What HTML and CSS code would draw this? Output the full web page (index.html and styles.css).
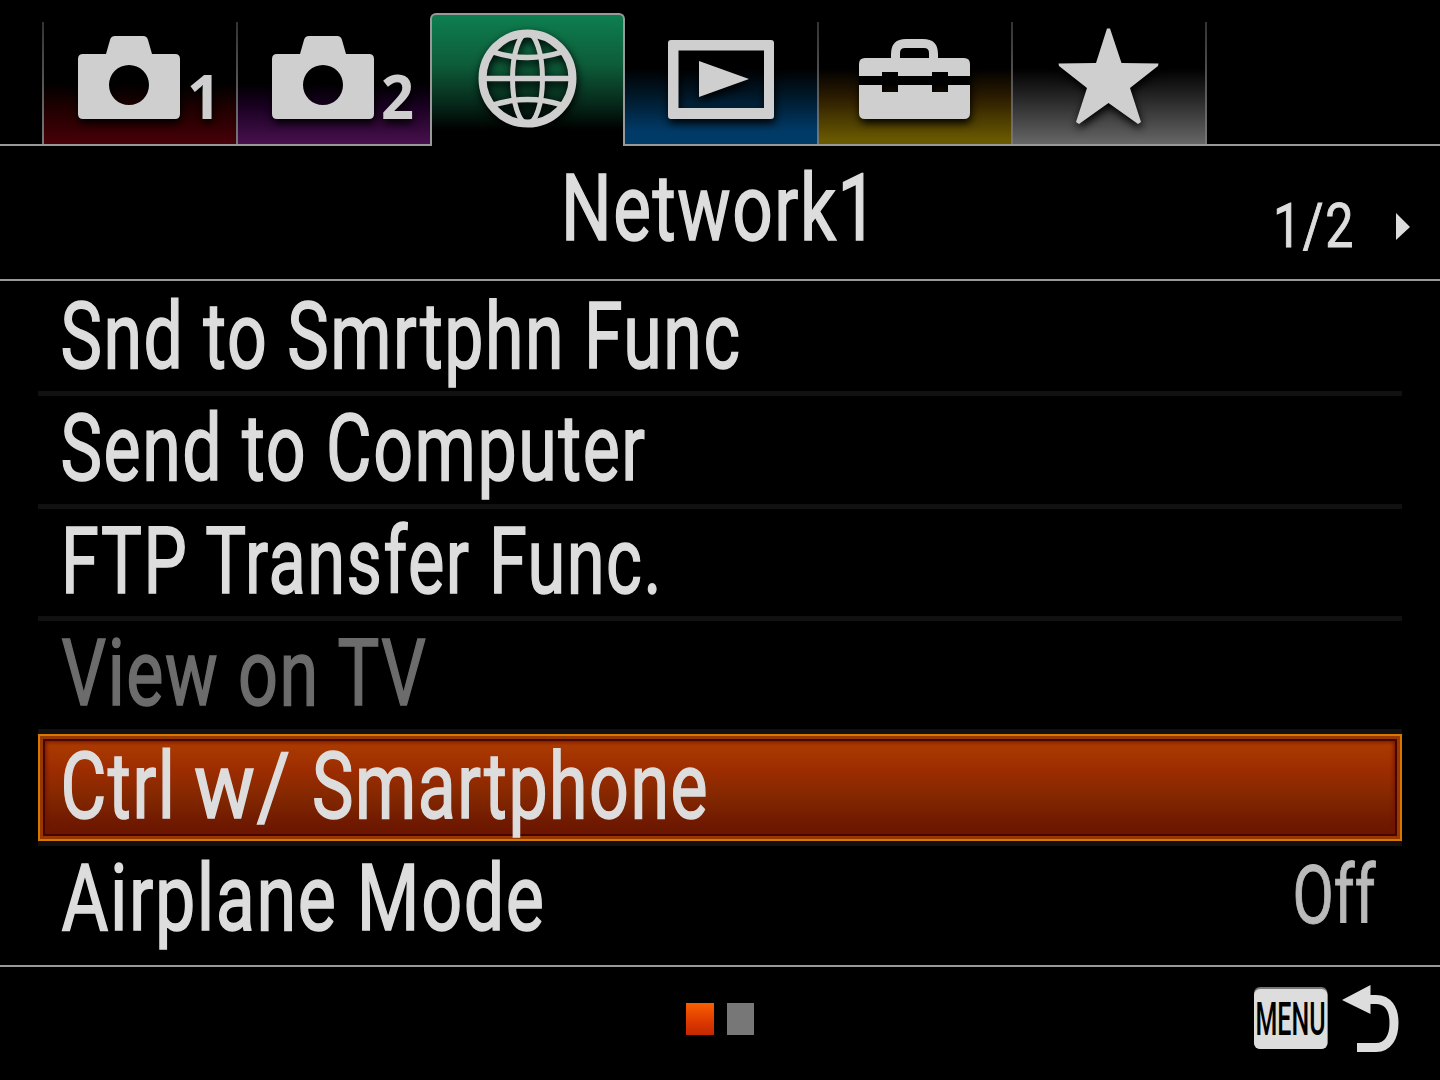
FILE: index.html
```
<!DOCTYPE html>
<html lang="en">
<head>
<meta charset="utf-8">
<title>Network1</title>
<link rel="stylesheet" href="styles.css">
</head>
<body>
<div class="screen">
  <nav class="tabs">
    <div class="tab tab-red">
      <svg class="icon" viewBox="43 22 194 122">
        <path fill-rule="evenodd" d="M83 54H106L110 40Q111 36 115 36H143Q147 36 148 40L152 54H175Q180 54 180 59V114Q180 119 175 119H83Q78 119 78 114V59Q78 54 83 54ZM129 65A20 20 0 1 0 129 105A20 20 0 1 0 129 65Z"/>
        <text class="num" x="187" y="118.500" textLength="34" lengthAdjust="spacingAndGlyphs">1</text>
      </svg>
    </div>
    <div class="tab tab-purple">
      <svg class="icon" viewBox="43 22 194 122">
        <path fill-rule="evenodd" d="M83 54H106L110 40Q111 36 115 36H143Q147 36 148 40L152 54H175Q180 54 180 59V114Q180 119 175 119H83Q78 119 78 114V59Q78 54 83 54ZM129 65A20 20 0 1 0 129 105A20 20 0 1 0 129 65Z"/>
        <text class="num" x="187" y="118.500" textLength="33" lengthAdjust="spacingAndGlyphs">2</text>
      </svg>
    </div>
    <div class="tab tab-active">
      <svg class="icon line" viewBox="431 22 194 122">
        <circle cx="527.5" cy="78.5" r="45" stroke-width="8"/>
        <ellipse cx="527.5" cy="78.5" rx="15" ry="45" stroke-width="5"/>
        <path stroke-width="5.5" d="M482 78.5H573M493 52Q527.5 63 562 52M493 105Q527.5 94 562 105"/>
      </svg>
    </div>
    <div class="tab tab-blue">
      <svg class="icon" viewBox="625 22 194 122">
        <path fill-rule="evenodd" d="M671 40H771Q774 40 774 43V116Q774 119 771 119H671Q668 119 668 116V43Q668 40 671 40ZM678.5 50.5V108H764V50.5Z"/>
        <path d="M699 61L749 79L699 97Z"/>
      </svg>
    </div>
    <div class="tab tab-yellow">
      <svg class="icon" viewBox="818 22 194 122">
        <rect class="gap" x="859" y="75" width="111" height="11"/>
        <path d="M865 58H891V54Q891 39 906 39H923Q938 39 938 54V58H964Q970 58 970 64V76H948V72H932V76H898V72H882V76H859V64Q859 58 865 58ZM900 58H929V53Q929 48 924 48H905Q900 48 900 53Z" fill-rule="evenodd"/>
        <path d="M859 85H882V92H898V85H932V92H948V85H970V113Q970 119 964 119H865Q859 119 859 113Z"/>
      </svg>
    </div>
    <div class="tab tab-gray">
      <svg class="icon" viewBox="1012 22 194 122">
        <path d="M1107 28.500H1110L1121.500 63L1158.500 63.500L1158 66L1130 88L1141 122L1138 124L1108.500 103L1079 124L1076 122L1087 88L1059 66L1058.500 63.500L1096 63Z"/>
      </svg>
    </div>
  </nav>

  <header class="title-bar">
    <svg class="line-text" viewBox="0 146 1440 133">
      <text class="t" x="561" y="239.500" textLength="318" lengthAdjust="spacingAndGlyphs">Network1</text>
      <text class="t page" x="1273" y="246.500" textLength="82" lengthAdjust="spacingAndGlyphs">1/2</text>
      <path class="next" d="M1396 213L1410 227L1396 240Z"/>
    </svg>
  </header>

  <main class="list">
    <div class="row"><svg class="label"><text class="t" x="22.500" y="84" textLength="681" lengthAdjust="spacingAndGlyphs">Snd to Smrtphn Func</text></svg></div>
    <div class="row"><svg class="label"><text class="t" x="22.500" y="84" textLength="586" lengthAdjust="spacingAndGlyphs">Send to Computer</text></svg></div>
    <div class="row"><svg class="label"><text class="t" x="23" y="84" textLength="602" lengthAdjust="spacingAndGlyphs">FTP Transfer Func.</text></svg></div>
    <div class="row disabled"><svg class="label"><text class="t" x="23.500" y="84" textLength="366" lengthAdjust="spacingAndGlyphs">View on TV</text></svg></div>
    <div class="row selected"><svg class="label"><text class="t" y="84"><tspan x="22.500" textLength="116" lengthAdjust="spacingAndGlyphs">Ctrl</tspan> <tspan x="156" textLength="98" lengthAdjust="spacingAndGlyphs">w/</tspan> <tspan x="274" textLength="397" lengthAdjust="spacingAndGlyphs">Smartphone</tspan></text></svg></div>
    <div class="row last"><svg class="label"><text class="t" x="23.500" y="84" textLength="484" lengthAdjust="spacingAndGlyphs">Airplane Mode</text><text class="t value" x="1254.500" y="77" textLength="83" lengthAdjust="spacingAndGlyphs">Off</text></svg></div>
  </main>

  <footer class="footer">
    <div class="dots"><span class="dot dot-on"></span><span class="dot"></span></div>
    <svg class="menu-back" viewBox="1250 980 160 80">
      <rect class="key-edge" x="1254" y="987" width="73.500" height="62" rx="6"/>
      <rect class="key" x="1254" y="989" width="73.500" height="60" rx="6"/>
      <text class="key-text" x="1255.500" y="1035" textLength="70" lengthAdjust="spacingAndGlyphs">MENU</text>
      <path class="key" d="M1342 1000L1370.500 985V1014Z"/>
      <path class="back" d="M1368 999.500H1376C1388 999.500 1394 1009 1394 1023S1388 1047.500 1376 1047.500H1357"/>
    </svg>
  </footer>
</div>
</body>
</html>
```
FILE: styles.css
```
body {
  margin: 0;
  background: #000;
}
.screen {
  width: 1440px;
  height: 1080px;
  display: flex;
  flex-direction: column;
  overflow: hidden;
  background: #000;
  color: #ddd;
  font-family: Roboto, "Liberation Sans", sans-serif;
}
.tabs {
  box-sizing: border-box;
  height: 146px;
  padding-left: 42px;
  display: flex;
  align-items: flex-end;
  border-bottom: 2px solid #999;
}
.tab {
  box-sizing: border-box;
  flex: none;
  width: 194px;
  height: 122px;
  background: linear-gradient(#333, #777) left / 2px 100% no-repeat, var(--fill);
}
.tab-red { --fill: linear-gradient(#000 50%, #1c0000 68%, #480008); }
.tab-purple { --fill: linear-gradient(#000 50%, #180020 68%, #48104e); }
.tab-blue {
  --fill: linear-gradient(#000 38%, #001a2c 62%, #003b68 90%);
  width: 193px;
  background: var(--fill);
}
.tab-yellow { --fill: linear-gradient(#000 38%, #2c1c00 62%, #685800 96%); }
.tab-gray {
  width: 196px;
  background: linear-gradient(#333, #777) left / 2px 100% no-repeat,
    linear-gradient(#333, #777) right / 2px 100% no-repeat,
    linear-gradient(#000 38%, #262626 62%, #666);
}
.tab-active {
  position: relative;
  height: 133px;
  width: 195px;
  margin: 0 -1px -2px 0;
  border: 2px solid #999;
  border-bottom: 0;
  border-radius: 6px 6px 0 0;
  background: linear-gradient(#0d7f50, #0d5c39 38%, #06281a 68%, #000 88%);
}
.icon {
  display: block;
  width: 194px;
  height: 122px;
  margin-left: 1px;
  overflow: visible;
  fill: #cfcfcf;
  filter: drop-shadow(1px 4px 4px #000);
}
.tab-active .icon {
  margin: 7px 0 0 -1px;
}
.line {
  fill: none;
  stroke: #cfcfcf;
}
.gap { fill: #000; }
.num {
  font: bold 61px "Noto Sans", sans-serif;
}
.title-bar {
  height: 133px;
  border-bottom: 2px solid #999;
}
.line-text {
  display: block;
  width: 1440px;
  height: 133px;
}
.t {
  fill: #ddd;
  stroke: #ddd;
  stroke-width: 1.600px;
  font-size: 92px;
  letter-spacing: 2px;
}
.page {
  font-size: 62px;
  stroke-width: 1px;
}
.next { fill: #ddd; }
.list {
  flex: 1;
  padding: 2.500px 38px 0;
}
.row {
  box-sizing: border-box;
  height: 112.500px;
  border-bottom: 5px solid #111;
}
.label {
  display: block;
  width: 100%;
  height: 107.500px;
  overflow: visible;
}
.last { border-bottom: 0; }
.disabled .t {
  fill: #6c6c6c;
  stroke: #6c6c6c;
}
.row .value {
  font-size: 81.500px;
  letter-spacing: 0;
  fill: #bababa;
  stroke: #bababa;
  stroke-width: 1px;
}
.selected {
  background: linear-gradient(#b04000, #9c2c00 35%, #842800 58%, #701a00 82%, #681400);
  background-clip: padding-box;
  box-shadow: inset 0 0 0 2px #d87800, inset 0 0 0 5px #953900, inset 0 0 0 7px #480500, inset 0 0 4px 8px #701600;
}
.footer {
  box-sizing: border-box;
  height: 115px;
  border-top: 2px solid #999;
  display: flex;
  justify-content: space-between;
  padding: 13px 30px 0 686px;
}
.dots {
  display: flex;
  gap: 13px;
  padding-top: 23px;
}
.dot {
  width: 27.500px;
  height: 32px;
  background: #777;
}
.dot-on { background: linear-gradient(#f86000, #dc3800 60%, #c42800); }
.menu-back {
  width: 160px;
  height: 80px;
}
.key-edge { fill: #777; }
.key { fill: #ddd; }
.key-text {
  font-size: 46.500px;
  font-weight: 500;
  fill: #000;
}
.back {
  fill: none;
  stroke: #ddd;
  stroke-width: 9;
}
```
